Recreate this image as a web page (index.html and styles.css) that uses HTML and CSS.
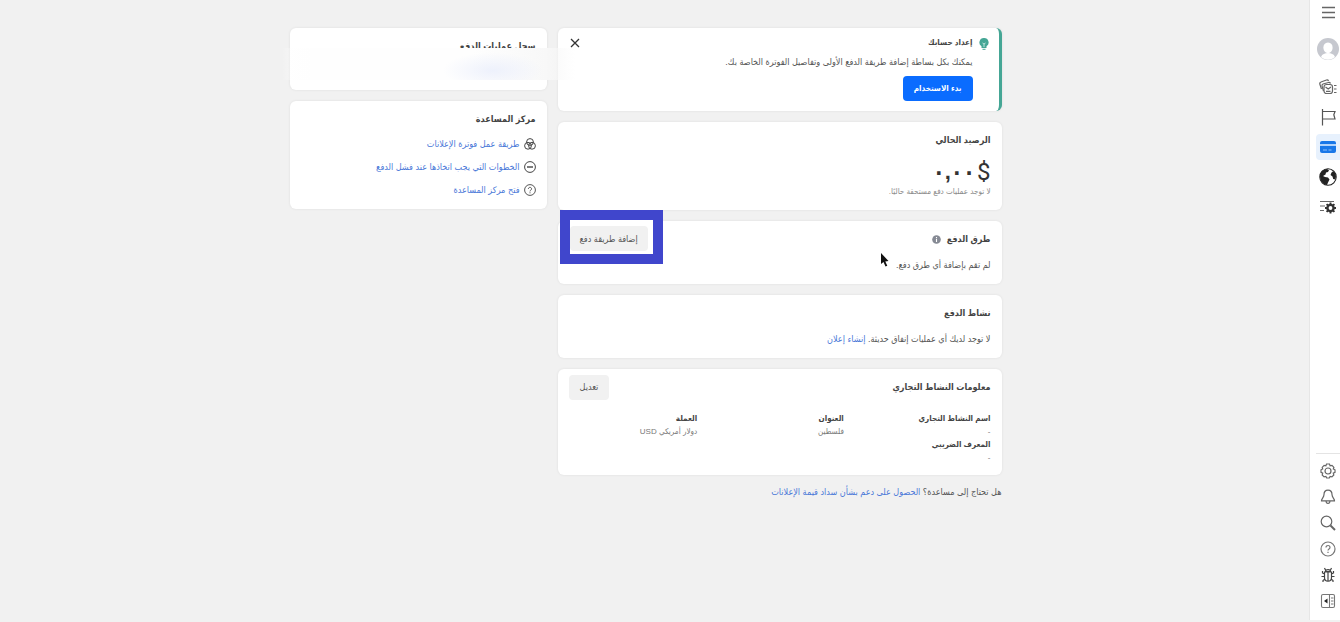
FILE: index.html
```html
<!DOCTYPE html>
<html lang="ar" dir="rtl">
<head>
<meta charset="utf-8">
<title>إعدادات الدفع</title>
<link rel="stylesheet" href="styles.css">
</head>
<body>
<div class="app">
  <nav class="rail" aria-label="القائمة">
    <div class="rail-top">
      <button class="rail-btn" aria-label="القائمة"><svg width="16" height="16" viewBox="0 0 16 16"><path d="M2 2.500h13M2 7.500h13M2 12.500h13" stroke="#666" stroke-width="1.700"/></svg></button>
      <button class="rail-btn avatar" aria-label="الحساب"><svg width="22" height="22" viewBox="0 0 22 22"><circle cx="11" cy="11" r="11" fill="#c6c8cf"/><path d="M11 4.500c3 0 4.600 2.200 4.600 5s-1.500 5.500-4.600 5.500-4.600-2.700-4.600-5.500S8 4.500 11 4.500z" fill="#fff"/><path d="M4 19c1-3 4-4 7-4s6 1 7 4c-4 3.500-10 3.500-14 0z" fill="#fff"/></svg></button>
      <button class="rail-btn" aria-label="الحملات"><svg width="18" height="16" viewBox="0 0 18 16" fill="none" stroke="#666" stroke-width="1.200"><path d="M2.500 10 .8 5Q.5 3.500 2 3L7.500 1q1.500-.4 2 1"/><path d="M4.500 12 3 6.800Q2.800 5.500 4 5l5.500-1.500q1.500-.2 2 1"/><rect x="5" y="5.500" width="8.500" height="9" rx="2.500"/><path d="m6.500 8 2.700 2L12 8M7 12.300h4.500M15 6.500h2.500M15 10h2.500M15 13.500h2.500"/></svg></button>
      <button class="rail-btn" aria-label="الصفحات"><svg width="18" height="18" viewBox="0 0 18 18" fill="none" stroke="#555" stroke-width="1.200"><path d="M3.500 1v16.500M3.500 3.500H16l-1.200 3.200L16 11H3.500"/></svg></button>
      <button class="rail-btn active" aria-label="الفوترة"><svg width="18" height="14" viewBox="0 0 18 14"><rect x="1" y="1" width="16" height="12" rx="2" fill="#1877e8"/><path d="M1 5h16" stroke="#d9eaff" stroke-width="1.600"/><path d="M4 10h4M9.500 10h3" stroke="#8fc0fa"/></svg></button>
      <button class="rail-btn" aria-label="العالم"><svg width="18" height="18" viewBox="0 0 18 18"><circle cx="9" cy="9" r="8.200" fill="#fff" stroke="#222" stroke-width="1.100"/><path d="M1 8C1 4.500 4 1.300 8 1l2 1.200-1 1.800-2 .6-.5 2L4 8l2 1 3 .5 1.500 2-1.500 3-1 2.500C4 16.500 1 13 1 8zM12 1.800c3 1.200 5 4 5 7l-.8 2.700-2-.5-.7-2.500-2-1.500 1-2.500 1.500-1z" fill="#222"/></svg></button>
      <button class="rail-btn" aria-label="خيارات"><svg width="18" height="16" viewBox="0 0 18 16" fill="none" stroke="#333"><path d="M1 2.500h14M1 7h5M1 11.500h4" stroke="#666" stroke-width="1.200"/><circle cx="11.500" cy="9" r="3.100" stroke-width="2.400"/><path d="M11.500 3.500v2M11.500 12.500v2M6 9h2M15 9h2M7.600 5.100 9 6.500M14 11.500l1.400 1.400M15.400 5.100 14 6.500M9 11.500l-1.400 1.400" stroke-width="1.900"/></svg></button>
    </div>
    <div class="rail-bottom">
      <button class="rail-btn" aria-label="الإعدادات"><svg width="16" height="16" viewBox="0 0 16 16" fill="none" stroke="#666" stroke-width="1.200"><path d="m6.500 1h3l.6 1.800 1.900-.5 1.900 2-.6 1.700 1.700.8v2.600l-1.700.7.5 1.900-1.900 1.900-1.800-.5-.8 1.600h-2.600l-.8-1.600-1.800.5L2.200 12l.5-1.900L1 9.400V6.800L2.700 6l-.5-1.700 1.900-2 1.800.5z"/><circle cx="8" cy="8" r="3"/></svg></button>
      <button class="rail-btn" aria-label="الإشعارات"><svg width="16" height="16" viewBox="0 0 16 16" fill="none" stroke="#666" stroke-width="1.200"><path d="M8 1.200C5 1.200 4 3.500 4 5.500c0 3-2.700 4.500-2.500 6.300h13C14.700 10 12 8.500 12 5.500c0-2-1-4.300-4-4.300zM6 12c.2 3.200 3.800 3.200 4 0"/></svg></button>
      <button class="rail-btn" aria-label="بحث"><svg width="16" height="16" viewBox="0 0 16 16" fill="none" stroke="#666"><circle cx="6.500" cy="6.500" r="5.300" stroke-width="1.200"/><path d="m10.500 10.500 4.500 4.500" stroke-width="1.900"/></svg></button>
      <button class="rail-btn" aria-label="مساعدة"><svg width="16" height="16" viewBox="0 0 16 16" fill="none" stroke="#777" stroke-width="1.200"><circle cx="8" cy="8" r="7"/><path d="M6 6.500c0-2.700 4-2.600 4 0C10 8 8 8 8 9.600M8 10.800v1.300"/></svg></button>
      <button class="rail-btn" aria-label="الإبلاغ عن مشكلة"><svg width="16" height="16" viewBox="0 0 16 16" fill="none" stroke="#444" stroke-width="1.200"><path d="M5.500 4.500C5.500 2 10.500 2 10.500 4.500zM4.500 5h7v5.500c0 5-7 5-7 0zM8 5v9M5.500 3 4.500 1M10.500 3l1-2M4.500 7 2.500 6V4M11.500 7l2-1V4M4.500 9.500h-3M11.500 9.500h3M5 12l-2 1.500V15M11 12l2 1.500V15"/></svg></button>
      <button class="rail-btn" aria-label="توسيع"><svg width="16" height="16" viewBox="0 0 16 16" fill="none" stroke="#777" stroke-width="1.100"><rect x="1.500" y="1.500" width="13" height="13" rx="1.500"/><path d="M9.500 1.500v13M11 5h2.500M11 8h2.500M11 11h2.500"/><path d="M4 8l3.500-2.500v5z" fill="#222" stroke="none"/></svg></button>
    </div>
  </nav>

  <main class="content">
    <div class="col">
      <section class="card setup">
        <svg class="bulb" width="10" height="12" viewBox="0 0 10 12"><path d="M5 0a4.500 4.500 0 0 1 2.500 8.300V10h-5V8.300A4.500 4.500 0 0 1 5 0z" fill="#45a695"/><path d="M3.500 5 5 6l1.500-1M5 6v3" stroke="#d9f2ec" fill="none" stroke-width=".8"/><path d="M3.500 11.300h3" stroke="#45a695"/></svg>
        <div class="setup-body">
          <h2 class="setup-title">إعداد حسابك</h2>
          <p class="text">يمكنك بكل بساطة إضافة طريقة الدفع الأولى وتفاصيل الفوترة الخاصة بك.</p>
          <button class="btn primary">بدء الاستخدام</button>
        </div>
        <button class="close" aria-label="إغلاق"><svg width="10" height="10" viewBox="0 0 10 10"><path d="m1 1 8 8M9 1 1 9" stroke="#333" stroke-width="1.300"/></svg></button>
      </section>

      <section class="card">
        <h2 class="title">الرصيد الحالي</h2>
        <p class="amount"><span class="currency">$</span><span>٠,٠٠</span></p>
        <p class="note">لا توجد عمليات دفع مستحقة حاليًا.</p>
      </section>

      <section class="card methods">
        <div class="head">
          <h2 class="title">طرق الدفع</h2>
          <svg class="info" width="9" height="9" viewBox="0 0 9 9"><circle cx="4.500" cy="4.500" r="4.300" fill="#868a94"/><path d="M4.500 4v3M4.500 2v1.200" stroke="#fff" stroke-width="1.100"/></svg>
          <div class="marked"><button class="btn">إضافة طريقة دفع</button></div>
        </div>
        <p class="text">لم تقم بإضافة أي طرق دفع.</p>
        <svg class="cursor" width="9" height="14" viewBox="0 0 9 14"><path d="M1 0v11l2.500-2 2 4.500 1.800-.8-2-4.300L8.500 8z" fill="#111"/></svg>
      </section>

      <section class="card">
        <h2 class="title">نشاط الدفع</h2>
        <p class="text">لا توجد لديك أي عمليات إنفاق حديثة. <a href="#">إنشاء إعلان</a></p>
      </section>

      <section class="card business">
        <div class="head">
          <h2 class="title">معلومات النشاط التجاري</h2>
          <button class="btn edit">تعديل</button>
        </div>
        <div class="facts">
          <dl><dt>اسم النشاط التجاري</dt><dd>-</dd><dt>المعرف الضريبي</dt><dd>-</dd></dl>
          <dl><dt>العنوان</dt><dd>فلسطين</dd></dl>
          <dl><dt>العملة</dt><dd>دولار أمريكي USD</dd></dl>
        </div>
      </section>
      <p class="support">هل تحتاج إلى مساعدة؟ <a href="#">الحصول على دعم بشأن سداد قيمة الإعلانات</a></p>
    </div>

    <aside class="col">
      <section class="card history">
        <h2 class="title">سجل عمليات الدفع</h2>
        <div class="smudge"></div>
      </section>
      <section class="card help">
        <h2 class="title">مركز المساعدة</h2>
        <ul class="links">
          <li><svg width="12" height="12" viewBox="0 0 12 12" fill="none" stroke="#444"><circle cx="6" cy="4" r="3.400"/><circle cx="4" cy="7.800" r="3.400"/><circle cx="8" cy="7.800" r="3.400"/></svg><a href="#">طريقة عمل فوترة الإعلانات</a></li>
          <li><svg width="12" height="12" viewBox="0 0 12 12" fill="none" stroke="#444"><circle cx="6" cy="6" r="5.400"/><path d="M3 6h6" stroke-width="1.400"/></svg><a href="#">الخطوات التي يجب اتخاذها عند فشل الدفع</a></li>
          <li><svg width="12" height="12" viewBox="0 0 12 12" fill="none" stroke="#555"><circle cx="6" cy="6" r="5.400"/><path d="M4.400 5c0-2.300 3.200-2.100 3.200 0C7.600 6 6 6 6 7.400M6 8.300v1"/></svg><a href="#">فتح مركز المساعدة</a></li>
        </ul>
      </section>
    </aside>
  </main>
</div>
</body>
</html>
```
FILE: styles.css
```css
* { box-sizing: border-box; }
body {
  margin: 0;
  background: #f1f1f1;
  color: #555;
  font: 9px/16px "Liberation Sans", "DejaVu Sans Condensed", "DejaVu Sans", sans-serif;
}
h2, p, ul, dl, dd { margin: 0; padding: 0; }
h2 { color: #444; }
button { font: inherit; color: inherit; border: 0; padding: 0; background: none; }
a { color: #4a78d8; text-decoration: none; }
svg { display: block; flex: none; }

.app { display: flex; min-height: 100vh; }

.rail {
  flex: none;
  width: 31px;
  margin-bottom: 2px;
  padding-inline-end: 6px;
  padding-bottom: 6px;
  background: #fff;
  border-left: 1px solid #e6e6e6;
  display: flex;
  flex-direction: column;
  justify-content: space-between;
}
.rail-top { display: flex; flex-direction: column; gap: 4px; }
.rail-btn { display: flex; align-items: center; justify-content: center; height: 26px; width: 100%; }
.rail-top .avatar { margin: 6px 0 8px; }
.rail-btn.active { background: #e7f1fd; border-radius: 4px 0 0 4px; }
.rail-bottom {
  border-top: 1px solid #e4e4e4;
  padding-top: 4px;
  display: flex;
  flex-direction: column;
}
.rail-bottom .rail-btn { height: 26px; }

.content {
  flex: 1;
  display: grid;
  grid-template-columns: minmax(0, 444px) minmax(0, 257px);
  gap: 11px;
  justify-content: center;
  align-items: start;
  padding: 28px 18px 16px 0;
}
.col { display: flex; flex-direction: column; gap: 11px; }
.card {
  position: relative;
  background: #fff;
  border-radius: 6px;
  padding: 10px 11px 11px;
  box-shadow: 0 0 3px rgba(0, 0, 0, .08);
}
.title { font-size: 9px; line-height: 16px; font-weight: bold; margin-bottom: 10px; }
.head { display: flex; align-items: center; gap: 6px; height: 16px; margin-bottom: 10px; }
.head .title { margin: 0; }
.btn {
  height: 25px;
  padding: 0 11px;
  border-radius: 4px;
  background: #f1f1f1;
  white-space: nowrap;
}
.primary { background: #0a6cff; color: #fff; font-weight: bold; font-size: 8px; margin-top: 6px; }

.setup { display: flex; gap: 6px; padding: 7px 10px 10px 12px; border-right: 3px solid #45a695; }
.bulb { margin-top: 3px; }
.setup-body { flex: 1; }
.setup-title { font-size: 8px; line-height: 16px; margin-bottom: 3px; }
.close { align-self: flex-start; padding: 3px 0; }

.amount { display: flex; align-items: center; gap: 2px; font-size: 22px; line-height: 28px; font-weight: bold; color: #333; }
.currency { font-family: Roboto, sans-serif; font-size: 24px; font-weight: normal; }
.note { font-size: 8px; line-height: 12px; color: #888; padding-bottom: 1px; }

.marked {
  position: absolute;
  left: 2px;
  top: -11px;
  border: 10px solid #4046cc;
  background: #fff;
  padding: 6px 5px 3px 0;
}
.marked .btn { display: block; padding: 0 10px; }
.cursor { position: absolute; right: 113px; top: 32px; }

.business .head { margin-bottom: 17px; }
.edit { margin-inline-start: auto; }
.facts { display: grid; grid-template-columns: repeat(3, 1fr); gap: 18px; line-height: 13px; font-size: 8px; }
.facts dt { font-weight: bold; color: #444; }
.facts dd { color: #777; }
.support { line-height: 12px; }

.history { min-height: 62px; }
.smudge {
  position: absolute;
  left: -8px;
  right: -28px;
  top: 20px;
  height: 32px;
  background:
    radial-gradient(ellipse 50px 18px at 72% 70%, rgba(236, 240, 252, .9), transparent),
    linear-gradient(to right, rgba(255, 255, 255, 0), #fefefe 10%, #fefefe 65%, #f8f8f8 90%, rgba(255, 255, 255, 0));
}
.help .title { margin-bottom: 9px; }
.links { list-style: none; display: flex; flex-direction: column; gap: 7px; }
.links li { display: flex; align-items: center; gap: 4px; }
```
